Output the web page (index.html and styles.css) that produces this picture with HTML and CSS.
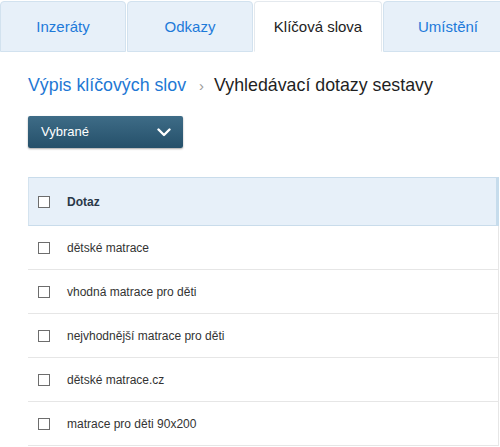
FILE: index.html
```html
<!DOCTYPE html>
<html lang="cs">
<head>
<meta charset="utf-8">
<title>Klíčová slova</title>
<link rel="stylesheet" href="styles.css">
</head>
<body>
  <nav class="tabs">
    <a class="tab">Inzeráty</a>
    <a class="tab">Odkazy</a>
    <a class="tab tab-active">Klíčová slova</a>
    <a class="tab">Umístění</a>
  </nav>

  <main class="content">
    <div class="breadcrumb">
      <a class="crumb-link">Výpis klíčových slov</a>
      <span class="crumb-sep">›</span>
      <span class="crumb-current">Vyhledávací dotazy sestavy</span>
    </div>

    <button class="select-btn" type="button">
      <span>Vybrané</span>
      <svg class="chevron" width="14" height="9" viewBox="0 0 14 9">
        <path d="M1.5 1.5 L7 7 L12.5 1.5" fill="none" stroke="#fff" stroke-width="2.4" stroke-linecap="round" stroke-linejoin="round"/>
      </svg>
    </button>

    <div class="table">
      <div class="row row-head">
        <span class="check"></span>
        <span class="cell">Dotaz</span>
      </div>
      <div class="row"><span class="check"></span><span class="cell">dětské matrace</span></div>
      <div class="row"><span class="check"></span><span class="cell">vhodná matrace pro děti</span></div>
      <div class="row"><span class="check"></span><span class="cell">nejvhodnější matrace pro děti</span></div>
      <div class="row"><span class="check"></span><span class="cell">dětské matrace.cz</span></div>
      <div class="row"><span class="check"></span><span class="cell">matrace pro děti 90x200</span></div>
    </div>
  </main>
</body>
</html>
```

FILE: styles.css
```css
html, body {
  margin: 0;
  padding: 0;
  background: #fff;
  font-family: "Liberation Sans", Arial, sans-serif;
  overflow: hidden;
}

/* tab strip */
.tabs {
  display: flex;
  padding-top: 1px;
  gap: 1px;
  white-space: nowrap;
}

.tab {
  flex: 0 0 126px;
  height: 51px;
  box-sizing: border-box;
  display: flex;
  align-items: center;
  justify-content: center;
  background: #e7f0f9;
  border: 1px solid #d2e2ef;
  border-radius: 4px 4px 0 0;
  color: #1d7ad9;
  font-size: 15px;
}

.tab:last-child {
  flex-basis: 130px;
}

.tab-active {
  background: #fff;
  color: #222;
  border-color: #e4e9ee;
  border-bottom-color: #fff;
  flex-basis: 128px;
}

/* page body */
.content {
  padding: 20px 0 0 28px;
}

.breadcrumb {
  display: flex;
  align-items: baseline;
  font-size: 17.8px;
  line-height: 26px;
  height: 26px;
}

.crumb-link {
  color: #1e78d4;
}

.crumb-sep {
  color: #9a9a9a;
  font-size: 15px;
  margin: 0 10px 0 13px;
}

.crumb-current {
  color: #1f1f1f;
}

.select-btn {
  margin-top: 18px;
  width: 155px;
  height: 32px;
  display: flex;
  align-items: center;
  justify-content: space-between;
  padding: 0 12px 0 13px;
  border: none;
  border-radius: 2px;
  background: linear-gradient(#3e6c87, #25506a);
  box-shadow: 0 1px 2px rgba(0, 0, 0, 0.35);
  color: #fff;
  font-family: inherit;
  font-size: 13px;
}

.select-btn span {
  margin-top: -2px;
}

.chevron {
  display: block;
  margin-top: 1px;
}

/* table */
.table {
  margin-top: 29px;
  width: 471px;
}

.row {
  display: flex;
  align-items: center;
  height: 44px;
  box-sizing: border-box;
  border-bottom: 1px solid #e6e6e6;
  border-right: 1px solid #e6e6e6;
  font-size: 12px;
  color: #333;
}

.row-head {
  height: 49px;
  background: #e7f0f9;
  border: 1px solid #c9dceb;
  border-left-color: #d4e3ef;
  border-right: 3px solid #c6dcec;
  color: #2a3848;
  font-weight: bold;
}

.check {
  width: 12px;
  height: 12px;
  box-sizing: border-box;
  border: 1px solid #6d6d6d;
  background: #fff;
  margin: 0 17px 0 10px;
  flex: none;
}

.row-head .check {
  margin-left: 9px;
}
```
